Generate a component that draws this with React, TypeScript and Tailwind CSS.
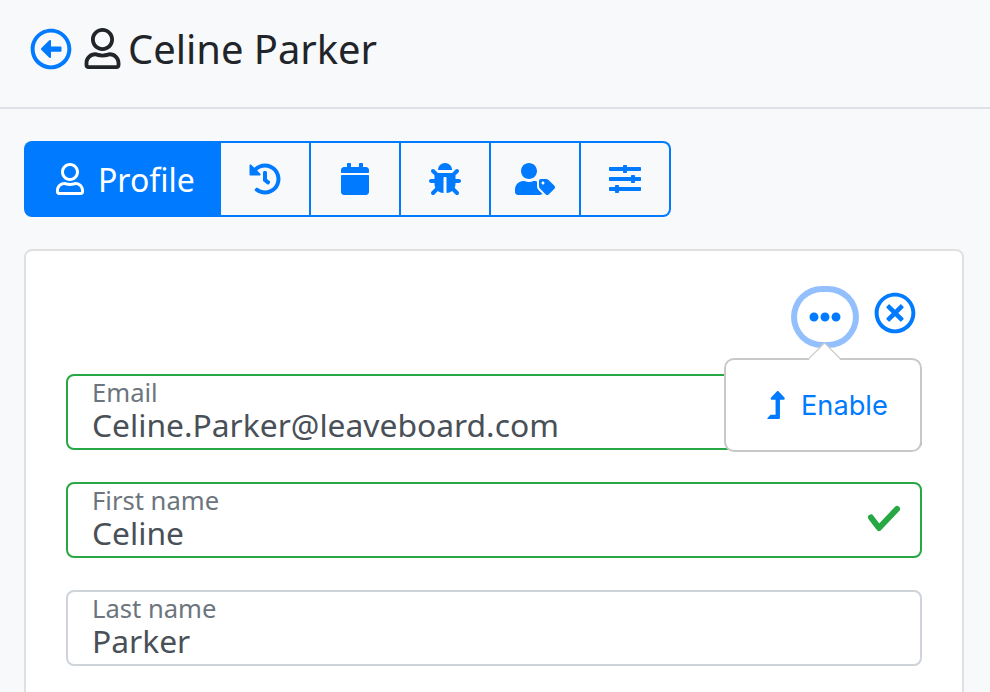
import { FaRegUser, FaHistory, FaCalendar, FaBug, FaUserTag, FaSlidersH, FaRegArrowAltCircleLeft, FaRegTimesCircle, FaEllipsisH, FaLevelUpAlt } from 'react-icons/fa';
import type { ReactNode } from 'react';

const tabs = [
  { id: 'history', icon: <FaHistory size={32} /> },
  { id: 'calendar', icon: <FaCalendar size={32} /> },
  { id: 'bug', icon: <FaBug size={32} /> },
  { id: 'tag', icon: <FaUserTag size={40} /> },
  { id: 'sliders', icon: <FaSlidersH size={32} /> },
];

function Field({ label, value, border, children }: { label: string; value: string; border: string; children?: ReactNode }) {
  return (
    <div className={`relative h-[76px] rounded-[8px] border-2 ${border} bg-white pl-[24px]`}>
      <div className="pt-[1px] text-[25.6px] leading-[32px] text-[#6c757d] h-[32px]">{label}</div>
      <div className="text-[31.8px] leading-[33px] text-[#495057]">{value}</div>
      {children}
    </div>
  );
}

export default function App() {
  return (
    <div className="h-[692px] w-[990px] overflow-hidden bg-[#f8f9fa] font-['Noto_Sans',sans-serif]">
      {/* Header */}
      <header className="h-[109px] border-b-2 border-[#dee2e6] pl-[30px] pt-[27px] flex items-start">
        <FaRegArrowAltCircleLeft size={42} className="text-[#007bff] mt-[1px]" />
        <FaRegUser size={41} className="text-[#212529] ml-[10px] mt-[1px]" />
        <h1 className="ml-[5px] text-[39.9px] leading-[44px] text-[#212529]">Celine Parker</h1>
      </header>

      {/* Tabs */}
      <div className="ml-[24px] mt-[32px] flex h-[76px] w-[647px]">
        <div className="flex w-[197px] items-center gap-[12px] rounded-l-[8px] bg-[#007bff] pl-[30px] text-white">
          <FaRegUser size={32} />
          <span className="pt-[1px] text-[32px] leading-none">Profile</span>
        </div>
        {tabs.map((tab, i) => (
          <div
            key={tab.id}
            className={`flex w-[90px] items-center justify-center border-y-2 border-r-2 border-[#007bff] text-[#007bff] ${i === tabs.length - 1 ? 'rounded-r-[8px]' : ''}`}
          >
            {tab.icon}
          </div>
        ))}
      </div>

      {/* Card */}
      <div className="ml-[24px] mt-[32px] h-[500px] w-[940px] rounded-[8px] border-2 border-[#dfe0e1] bg-white px-[40px]">
        <div className="relative flex h-[123px] justify-end">
          <div className="absolute left-[731px] top-[41px] flex h-[50px] w-[56px] items-center justify-center rounded-full text-[#007bff] shadow-[0_0_0_6px_#93c0fd]">
            <FaEllipsisH size={32} />
          </div>
          <FaRegTimesCircle size={42} className="absolute left-[808px] top-[41px] text-[#007bff]" />
        </div>

        <div className="relative flex flex-col gap-[32px]">
          <Field label="Email" value="Celine.Parker@leaveboard.com" border="border-[#28a745]" />
          <Field label="First name" value="Celine" border="border-[#28a745]">
            <svg width="34" height="30" viewBox="0 0 34 30" fill="none" className="absolute right-[19px] top-[21px] text-[#28a745]">
              <path d="M4 12.5 L12 23 L30 4" stroke="currentColor" strokeWidth="6" strokeLinecap="round" strokeLinejoin="round" />
            </svg>
          </Field>
          <Field label="Last name" value="Parker" border="border-[#ced4da]" />

          {/* Popover */}
          <div className="absolute left-[658px] top-[-16px] flex h-[94px] w-[198px] items-center rounded-[10px] border-2 border-[#c8c8c8] bg-white pl-[36px] text-[#007bff] font-['Inter',sans-serif]">
            <div className="absolute left-[87px] top-[-13px] h-[23px] w-[23px] rotate-45 border-l border-t border-[#c0c0c0] bg-white" />
            <FaLevelUpAlt size={28} />
            <span className="ml-[11px] pt-[1px] text-[27.2px] leading-none">Enable</span>
          </div>
        </div>
      </div>
    </div>
  );
}
